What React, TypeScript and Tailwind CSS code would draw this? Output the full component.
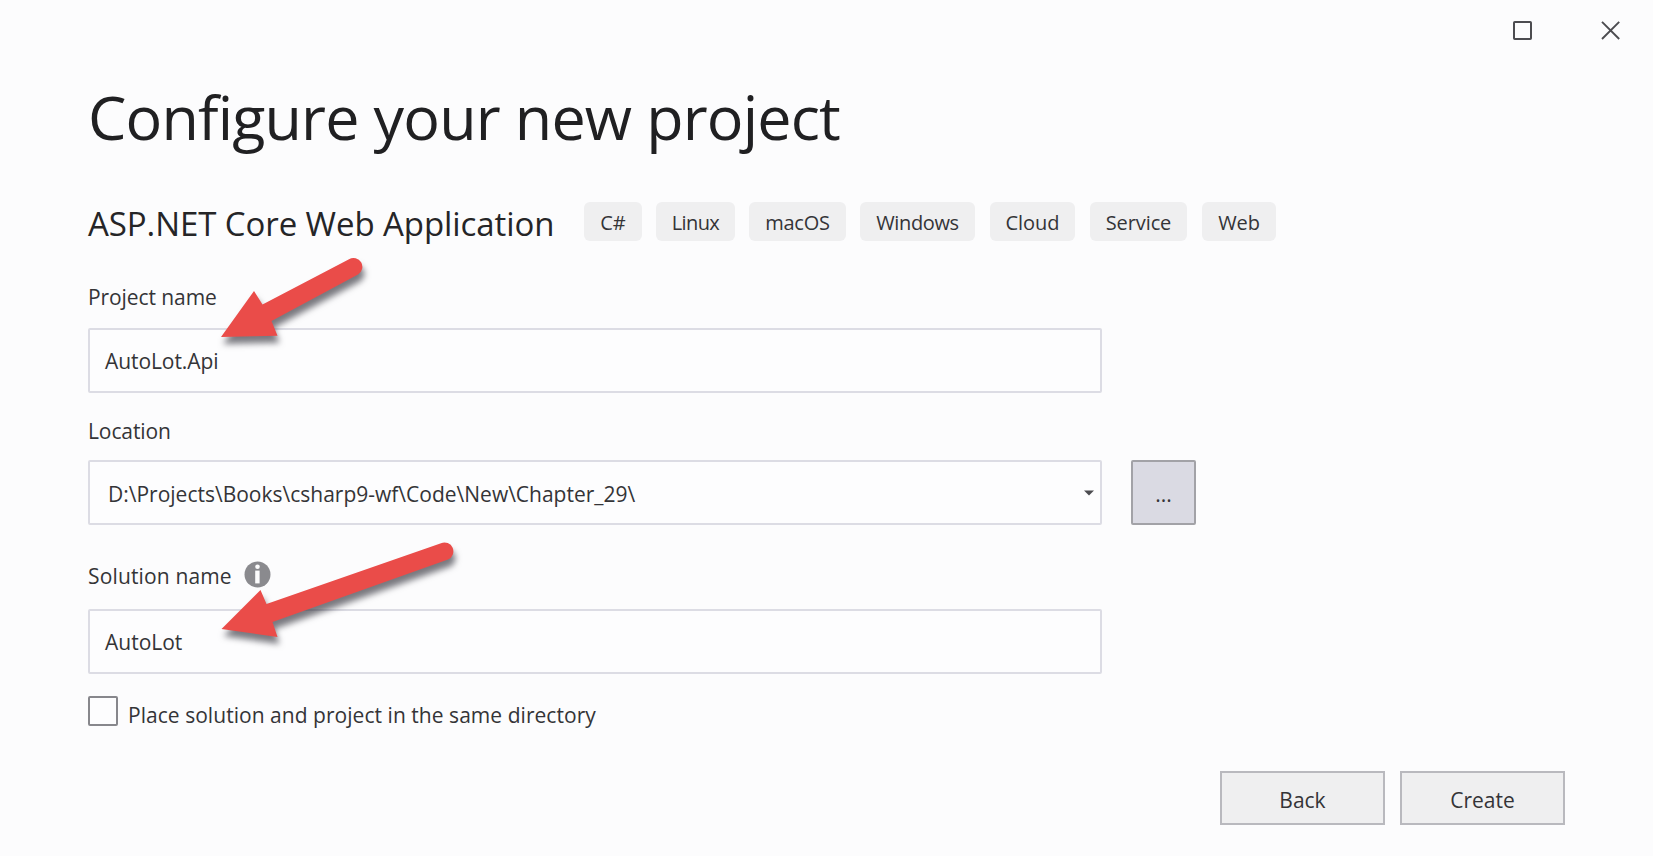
const tags = [
  { name: "C#", box: "w-[58px]" },
  { name: "Linux", box: "ml-[14px] w-[79px] tracking-[-0.6px]" },
  { name: "macOS", box: "ml-[14px] w-[97px] tracking-[-0.2px]" },
  { name: "Windows", box: "ml-[14px] w-[115px] tracking-[-0.35px]" },
  { name: "Cloud", box: "ml-[15px] w-[85px]" },
  { name: "Service", box: "ml-[15px] w-[97px] tracking-[-0.1px]" },
  { name: "Web", box: "ml-[15px] w-[74px] tracking-[-0.1px]" },
];

function WindowControls() {
  return (
    <div className="flex h-[73px] justify-end gap-[69px] pt-5 pr-[33px]">
      <svg width="20" height="20" viewBox="0 0 20 20" fill="none">
        <rect x="2" y="2" width="17" height="17" rx="0.8" stroke="#4c4c50" strokeWidth="2" />
      </svg>
      <svg width="19" height="20" viewBox="0 0 19 20" fill="none">
        <path d="M1 1.8L18.2 19M18.2 1.8L1 19" stroke="#4c4c50" strokeWidth="1.9" />
      </svg>
    </div>
  );
}

function Arrow({ d, place }: { d: string; place: string }) {
  return (
    <svg
      className={`pointer-events-none absolute overflow-visible drop-shadow-[2px_7px_3px_rgba(40,40,50,0.62)] ${place}`}
      width="240"
      height="100"
      viewBox="0 0 240 100"
    >
      <path d={d} fill="#ea4c49" />
    </svg>
  );
}

export default function App() {
  return (
    <div className="relative flex h-[856px] w-[1653px] flex-col overflow-hidden bg-[#fcfcfd] font-['Open_Sans','Noto_Sans',sans-serif] text-[21px] leading-[30px] text-[#343437]">
      <WindowControls />
      <div className="flex flex-1 flex-col pl-[88px]">
        <h1 className="h-[84px] text-[61px] leading-[87px] tracking-[-0.84px] whitespace-nowrap text-[#202022]">
          Configure your new project
        </h1>

        <div className="mt-[45px] flex h-[39px] items-center">
          <h2 className="w-[496px] pt-[3px] text-[33px] leading-[39px] tracking-[-0.08px] whitespace-nowrap text-[#252527]">
            ASP.NET Core Web Application
          </h2>
          {tags.map((tag) => (
            <span
              key={tag.name}
              className={`h-[39px] rounded-md bg-[#efeff0] text-center text-xl leading-[42px] ${tag.box}`}
            >
              {tag.name}
            </span>
          ))}
        </div>

        <label className="mt-10 h-[30px] leading-8 tracking-[-0.08px]">Project name</label>
        <div className="mt-[17px] h-[65px] w-[1014px] rounded-xs border-2 border-[#dcdce4] bg-[#fdfdfe] pl-[15px] leading-[62px] tracking-[-0.08px]">
          AutoLot.Api
        </div>

        <label className="mt-[22px] h-[30px] leading-8 tracking-[-0.1px]">Location</label>
        <div className="mt-[15px] flex h-[65px] gap-[29px]">
          <div className="flex w-[1014px] items-center justify-between rounded-xs border-2 border-[#dcdce4] bg-[#fdfdfe] pr-[6px] pl-[18px]">
            <span className="pt-[3px]">{"D:\\Projects\\Books\\csharp9-wf\\Code\\New\\Chapter_29\\"}</span>
            <svg width="10" height="6" viewBox="0 0 10 6">
              <path d="M0 0.5H10L5 5.5Z" fill="#4c4c50" />
            </svg>
          </div>
          <button className="flex w-[65px] items-center justify-center rounded-xs border-2 border-[#a2a2a7] bg-[#dadae3]">
            <span className="pt-[3px]">...</span>
          </button>
        </div>

        <div className="mt-[36px] flex h-[30px]">
          <label className="w-[156px] tracking-[0.15px]">Solution name</label>
          <svg width="27" height="27" viewBox="0 0 27 27">
            <circle cx="13.5" cy="13.5" r="13" fill="#8a8a8e" />
            <circle cx="13.5" cy="5.8" r="2.3" fill="#fcfcfd" />
            <path d="M11.2 9.6H15.6V22.4H11.2Z" fill="#fcfcfd" />
          </svg>
        </div>
        <div className="mt-[18px] h-[65px] w-[1014px] rounded-xs border-2 border-[#dcdce4] bg-[#fdfdfe] pl-[15px] leading-[62px]">
          AutoLot
        </div>

        <div className="mt-[22px] flex h-[35px]">
          <span className="h-[30px] w-[30px] rounded-xs border-2 border-[#87878c] bg-[#fdfdfe]" />
          <span className="pt-[4px] pl-[10px] tracking-[0.04px]">Place solution and project in the same directory</span>
        </div>

        <div className="mt-10 mr-[88px] flex h-[54px] justify-end gap-[15px]">
          <button className="w-[165px] border-2 border-[#b9b9be] bg-[#efeff0] pt-[3px]">Back</button>
          <button className="w-[165px] border-2 border-[#b9b9be] bg-[#efeff0] pt-[3px]">Create</button>
        </div>
      </div>

      <Arrow
        place="top-[250px] left-[200px]"
        d="M21 87L54 41L62.5 54.5L149 9.2A8.7 8.7 0 0 1 158 24.5L71.5 71L77.5 85.8Z"
      />
      <Arrow
        place="top-[530px] left-[200px]"
        d="M21.5 99L60.5 60L66.5 74L241 13.2A8.8 8.8 0 0 1 248 29.5L72.5 92L77.5 107Z"
      />
    </div>
  );
}
